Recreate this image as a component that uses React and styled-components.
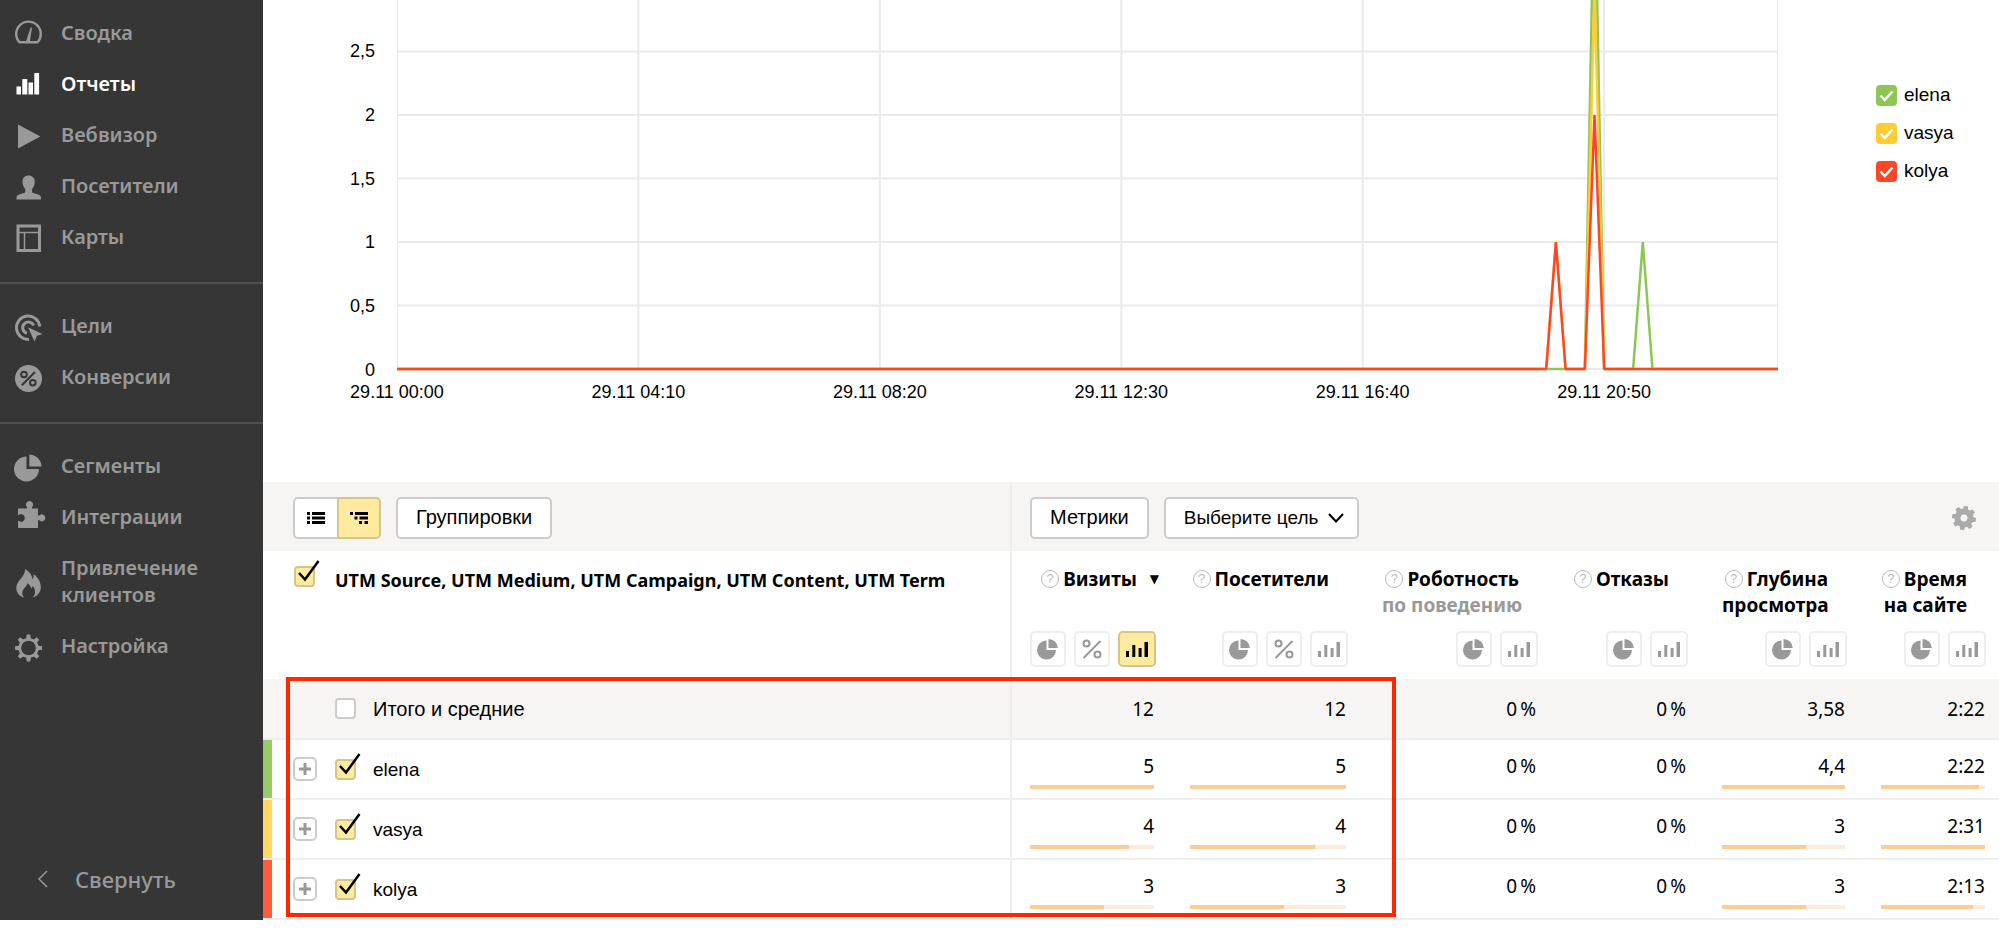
import React, { useState } from 'react';
import styled, { createGlobalStyle } from 'styled-components';

const STEPS = 143;
const TICK_STEP = 25;
const UNIT = 127;
const BASE = 369;

const yTicks = ['2,5', '2', '1,5', '1', '0,5', '0'];
const xTicks = ['29.11 00:00', '29.11 04:10', '29.11 08:20', '29.11 12:30', '29.11 16:40', '29.11 20:50'];

const series = [
  { name: 'elena', color: '#8dc653', stripe: '#97cc64', peaks: [[124, 4], [129, 1]] },
  { name: 'vasya', color: '#ffcc33', stripe: '#ffd963', peaks: [[120, 1], [124, 3]] },
  { name: 'kolya', color: '#ff4527', stripe: '#ff5c3e', peaks: [[120, 1], [124, 2]] },
];

const menu = [
  [
    { icon: 'gauge', label: 'Сводка' },
    { icon: 'bars', label: 'Отчеты', active: true },
    { icon: 'play', label: 'Вебвизор' },
    { icon: 'person', label: 'Посетители' },
    { icon: 'map', label: 'Карты' },
  ],
  [
    { icon: 'target', label: 'Цели' },
    { icon: 'percent', label: 'Конверсии' },
  ],
  [
    { icon: 'pie', label: 'Сегменты' },
    { icon: 'puzzle', label: 'Интеграции' },
    { icon: 'fire', label: 'Привлечение клиентов' },
    { icon: 'gear', label: 'Настройка' },
  ],
];

const columns = [
  { title: 'Визиты', width: 160, tools: ['pie', 'percent', 'bars'], active: 'bars', sorted: true },
  { title: 'Посетители', width: 192, tools: ['pie', 'percent', 'bars'] },
  { title: 'Роботность', sub: 'по поведению', muted: true, width: 190, tools: ['pie', 'bars'] },
  { title: 'Отказы', width: 150, tools: ['pie', 'bars'] },
  { title: 'Глубина', sub: 'просмотра', width: 159, tools: ['pie', 'bars'] },
  { title: 'Время', sub: 'на сайте', width: 136, tools: ['pie', 'bars'] },
];

const totals = ['12', '12', '0\u2009%', '0\u2009%', '3,58', '2:22'];

const rows = [
  { values: ['5', '5', '0\u2009%', '0\u2009%', '4,4', '2:22'], shares: [100, 100, null, null, 100, 94] },
  { values: ['4', '4', '0\u2009%', '0\u2009%', '3', '2:31'], shares: [80, 80, null, null, 68, 100] },
  { values: ['3', '3', '0\u2009%', '0\u2009%', '3', '2:13'], shares: [60, 60, null, null, 68, 88] },
];

const linePoints = (peaks) => {
  const points = [[0, 0]];
  peaks.forEach(([at, value]) => {
    points.push([at - 1, 0], [at, value], [at + 1, 0]);
  });
  points.push([STEPS, 0]);
  return points.map(([x, v]) => `${x * 10},${BASE - v * UNIT}`).join(' ');
};

const teeth = [0, 45, 90, 135, 180, 225, 270, 315];

const menuIcons = {
  gauge: (
    <>
      <path d='M7.4 25.2 A12.3 12.3 0 1 1 25.6 25.2 Z' fill='none' stroke='currentColor' strokeWidth='2.4' strokeLinejoin='round'/>
      <path d='M20 10.500 L17.800 25 H13.800 L18.600 10.500 Z' fill='currentColor'/>
    </>
  ),
  bars: <path d='M4.5 18.5h4.5v8h-4.5z M10.3 11h5v15.5h-5z M16.5 14.5h4.5v12h-4.5z M22.3 5h4.8v21.5h-4.8z' fill='currentColor'/>,
  play: <path d='M6 5.5 L28.4 17.5 L6 29.5 Z' fill='currentColor'/>,
  person: <path d='M16.5 5.5c-3.6 0-6 2.500-6 6 0 3.200 1 5.800 2.700 7.500v3.500c-3.200 1.500-8.700 1.800-8.700 5v2h24.500v-2c0-3.200-5.500-3.500-8.900-5v-3.500c1.700-1.700 2.600-4.300 2.600-7.500 0-3.500-2.600-6-6.200-6z' fill='currentColor'/>,
  map: (
    <>
      <rect x='6' y='5' width='21.500' height='24.500' fill='none' stroke='currentColor' strokeWidth='3'/>
      <path d='M6 11.500 H27 M12.500 11.500 V29' fill='none' stroke='currentColor' strokeWidth='1.500'/>
    </>
  ),
  target: (
    <>
      <path d='M27.800 16.500 A11.700 11.700 0 1 0 17 29.400' fill='none' stroke='currentColor' strokeWidth='3'/>
      <path d='M21.600 15.500 A5.700 5.700 0 1 0 15 23.300' fill='none' stroke='currentColor' strokeWidth='3'/>
      <path d='M16 17.300 L30.500 24 L25 25.800 L22.500 31.500 Z' fill='currentColor'/>
    </>
  ),
  percent: (
    <>
      <circle cx='16.500' cy='17.500' r='13.500' fill='currentColor'/>
      <g fill='none' stroke='#363636' strokeWidth='2'>
        <circle cx='12' cy='13.500' r='2.800'/>
        <circle cx='20.800' cy='21.800' r='2.800'/>
        <path d='M23 11 L9.800 24.200'/>
      </g>
    </>
  ),
  pie: (
    <path d='M14.500 6.500 V19 H27 A12.500 12.500 0 1 1 14.500 6.500 Z M17.300 4.500 A12.300 12.300 0 0 1 29.500 16.500 H17.300 Z' fill='currentColor'/>
  ),
  puzzle: (
    <path d='M6 7.500h8.200c1.200 0 1.200-.8.600-1.600a3.500 3.500 0 1 1 5.400 0c-.6.800-.6 1.600.6 1.600h5.200v6.200c0 1.200.8 1.200 1.600.6a3.400 3.400 0 1 1 0 5.200c-.8-.6-1.600-.6-1.600.6v6.900h-20v-7.500c1.200 1 3 1.600 4.600.9a3.700 3.700 0 0 0 0-6.800c-1.600-.7-3.400-.1-4.600.9z' fill='currentColor'/>
  ),
  fire: (
    <path d='M13 4c5 3 7.500 7 7.600 10.500 1-1.200 1.300-3.500.9-5.500 4.500 3 7.300 8.300 7.300 13 0 5.300-3.300 9.300-8.300 10.500 2-2 2.800-4 2.500-6.500-.2-2-1-3.600-2.500-5-.1 1.300-.5 2-1.300 2.600-.5-2.500-1.700-4.200-4-5.300.3 3-4.700 5.200-4.900 9.400-.1 1.900.6 3.400 2 4.800-5-1.200-8-4.800-8-9.800 0-7.200 9.500-11.200 8.700-18.700z' fill='currentColor'/>
  ),
  gear: (
    <>
      <circle cx='16.500' cy='18' r='8.700' fill='none' stroke='currentColor' strokeWidth='2.800'/>
      {teeth.map((angle) => (
        <path key={angle} transform={`rotate(${angle} 16.500 18)`} d='M14 9.500 L14.800 4.500 H18.200 L19 9.500 Z' fill='currentColor'/>
      ))}
    </>
  ),
};

const toolIcons = {
  pie: <path d='M9.500 2.500 V12 H19 A9.500 9.500 0 1 1 9.500 2.500 Z M11.500 1 A9.300 9.300 0 0 1 20.800 10 H11.500 Z' fill='currentColor'/>,
  percent: (
    <g fill='none' stroke='currentColor' strokeWidth='2'>
      <circle cx='5.500' cy='5.500' r='3'/>
      <circle cx='16.500' cy='16.500' r='3'/>
      <path d='M19.500 3 L2.500 20'/>
    </g>
  ),
  bars: <path d='M0 13h3v6H0z M6.300 7h3v12h-3z M12.600 10h3v9h-3z M18.500 4h3.500v15h-3.500z' fill='currentColor'/>,
};

const Check = ({ label, defaultChecked }) => {
  const [checked, setChecked] = useState(defaultChecked);

  return(
    <CheckBox>
      <CheckInput type='checkbox' aria-label={label} checked={checked} onChange={() => setChecked(!checked)}/>
      {checked &&
        <CheckTick viewBox='0 0 21 21' aria-hidden='true'>
          <path d='M5 7 L11 13.500 L24.500 -5'/>
        </CheckTick>
      }
    </CheckBox>
  );
};

const LegendItem = ({ name, color }) => {
  const [checked, setChecked] = useState(true);

  return(
    <LegendLabel>
      <CheckBox>
        <LegendInput type='checkbox' $color={color} checked={checked} onChange={() => setChecked(!checked)}/>
        {checked &&
          <LegendTick viewBox='0 0 21 21' aria-hidden='true'>
            <path d='M4.500 10.500 L8.800 15 L16.500 6.500'/>
          </LegendTick>
        }
      </CheckBox>
      {name}
    </LegendLabel>
  );
};

const Sidebar = () => (
  <SidebarNav>
    {menu.map((group, i) => (
      <MenuGroup key={i}>
        {group.map(({ icon, label, active }) => (
          <MenuLink key={label} href='#' $active={active}>
            <MenuIcon viewBox='0 0 32 32' aria-hidden='true'>{menuIcons[icon]}</MenuIcon>
            <MenuLabel>{label}</MenuLabel>
          </MenuLink>
        ))}
      </MenuGroup>
    ))}
    <CollapseButton type='button'>
      <CollapseIcon viewBox='0 0 10 18' aria-hidden='true'>
        <path d='M9 1 L1 9 L9 17'/>
      </CollapseIcon>
      Свернуть
    </CollapseButton>
  </SidebarNav>
);

const Chart = () => (
  <ChartSection>
    <YAxis>
      {yTicks.map((tick) => <span key={tick}>{tick}</span>)}
    </YAxis>
    <PlotColumn>
      <Plot viewBox={`0 0 ${STEPS * 10} 371`} preserveAspectRatio='none'>
        <g stroke='#eaeaea' strokeWidth='2'>
          {yTicks.map((tick, i) => (
            <line key={tick} x1='0' x2={STEPS * 10} y1={BASE - (5 - i) * UNIT / 2} y2={BASE - (5 - i) * UNIT / 2} vectorEffect='non-scaling-stroke'/>
          ))}
          {[...xTicks.map((_, i) => i * TICK_STEP), STEPS].map((at) => (
            <line key={at} x1={at * 10} x2={at * 10} y1='0' y2={BASE + 1} vectorEffect='non-scaling-stroke'/>
          ))}
        </g>
        {series.map(({ name, color, peaks }) => (
          <polyline key={name} points={linePoints(peaks)} fill='none' stroke={color} strokeWidth='2.500' strokeLinejoin='bevel' vectorEffect='non-scaling-stroke'/>
        ))}
      </Plot>
      <XAxis>
        {xTicks.map((tick) => <XTick key={tick}><XLabel>{tick}</XLabel></XTick>)}
      </XAxis>
    </PlotColumn>
    <Legend>
      {series.map(({ name, color }) => <LegendItem key={name} name={name} color={color}/>)}
    </Legend>
  </ChartSection>
);

const Toolbar = () => (
  <ToolbarRow>
    <ToolbarLeft>
      <Segmented>
        <Segment type='button' aria-label='Список'>
          <SegmentIcon viewBox='0 0 18 12'>
            <path d='M0 0h3v3H0z M5 0h13v3H5z M0 4.500h3v3H0z M5 4.500h13v3H5z M0 9h3v3H0z M5 9h13v3H5z'/>
          </SegmentIcon>
        </Segment>
        <Segment type='button' aria-label='Дерево' $active>
          <SegmentIcon viewBox='0 0 18 12'>
            <path d='M0 0h3v3H0z M5 0h13v3H5z M4.500 4.500h3v3h-3z M9.500 4.500h8.500v3h-8.500z M9 9h3v3H9z M14.500 9h3.500v3h-3.500z'/>
          </SegmentIcon>
        </Segment>
      </Segmented>
      <Button type='button'>Группировки</Button>
    </ToolbarLeft>
    <ToolbarRight>
      <Button type='button'>Метрики</Button>
      <SelectBox>
        <GoalSelect aria-label='Цель'>
          <option>Выберите цель</option>
        </GoalSelect>
        <SelectArrow viewBox='0 0 16 10' aria-hidden='true'>
          <path d='M1 1 L8 8.500 L15 1'/>
        </SelectArrow>
      </SelectBox>
      <SettingsButton type='button' aria-label='Настройки'>
        <svg width='24' height='24' viewBox='0 0 24 24'>
          <g transform='rotate(10 12 12)'>
            <circle cx='12' cy='12' r='6.500' fill='none' stroke='currentColor' strokeWidth='6'/>
            {teeth.map((angle) => (
              <path key={angle} transform={`rotate(${angle} 12 12)`} d='M9.300 4.500 L10 0 H14 L14.700 4.500 Z' fill='currentColor'/>
            ))}
          </g>
        </svg>
      </SettingsButton>
    </ToolbarRight>
  </ToolbarRow>
);

const HeadCell = ({ title, sub, muted, sorted, tools, active }) => (
  <MetricHead scope='col'>
    <HeadInner>
      <HeadTitle>
        <HeadLine><Hint>?</Hint>{title}{sorted && <SortMark>▼</SortMark>}</HeadLine>
        {sub && <HeadSub $muted={muted}>{sub}</HeadSub>}
      </HeadTitle>
      <Tools>
        {tools.map((tool) => (
          <Tool key={tool} type='button' aria-label={tool} $wide={tool === 'bars'} $active={tool === active}>
            <ToolIcon viewBox='0 0 22 22'>{toolIcons[tool]}</ToolIcon>
          </Tool>
        ))}
      </Tools>
    </HeadInner>
  </MetricHead>
);

const Report = () => (
  <ReportBox>
    <Table>
      <colgroup>
        <col/>
        {columns.map(({ title, width }) => <Col key={title} $width={width}/>)}
      </colgroup>
      <thead>
        <tr>
          <NameHead scope='col'>
            <NameHeadInner>
              <Check label='Выбрать все' defaultChecked/>
              <span>UTM Source, UTM Medium, UTM Campaign, UTM Content, UTM Term</span>
            </NameHeadInner>
          </NameHead>
          {columns.map((column) => <HeadCell key={column.title} {...column}/>)}
        </tr>
      </thead>
      <tbody>
        <TotalRow>
          <NameCell scope='row'>
            <NameInner $total>
              <ExpandSpace/>
              <Check label='Итого и средние' defaultChecked={false}/>
              <NameText $total>Итого и средние</NameText>
            </NameInner>
          </NameCell>
          {totals.map((value, i) => <TotalCell key={i}>{value}</TotalCell>)}
        </TotalRow>
        {rows.map(({ values, shares }, r) => (
          <tr key={r}>
            <NameCell scope='row'>
              <NameInner $stripe={series[r].stripe}>
                <ExpandButton type='button' aria-label='Развернуть'>
                  <svg width='12' height='12' viewBox='0 0 12 12'>
                    <path d='M6 0 V12 M0 6 H12' stroke='#999' strokeWidth='3'/>
                  </svg>
                </ExpandButton>
                <Check label={series[r].name} defaultChecked/>
                <NameText>{series[r].name}</NameText>
              </NameInner>
            </NameCell>
            {values.map((value, i) => (
              <ValueCell key={i}>
                {value}
                {shares[i] && <Track><Fill style={{ width: `${shares[i]}%` }}/></Track>}
              </ValueCell>
            ))}
          </tr>
        ))}
      </tbody>
    </Table>
    <Highlight/>
  </ReportBox>
);

const App = () => (
  <>
    <GlobalStyle/>
    <Page>
      <Sidebar/>
      <Main>
        <Chart/>
        <Toolbar/>
        <Report/>
      </Main>
    </Page>
  </>
);

const GlobalStyle = createGlobalStyle`
  * {
    box-sizing: border-box;
  }
  body {
    margin: 0;
    background: #fff;
    color: #000;
    font-family: 'Liberation Sans', Arial, sans-serif;
    font-size: 19px;
  }
  button, select {
    font: inherit;
    color: inherit;
    cursor: pointer;
  }
`;

const Page = styled.div`
  display: grid;
  grid-template-columns: 263px 1fr;
`;

const Main = styled.main`
  min-width: 0;
`;

const SidebarNav = styled.nav`
  display: flex;
  flex-direction: column;
  padding: 7px 0 16px;
  background: #363636;
  color: #999;
  font-family: 'Noto Sans', sans-serif;
  font-size: 20px;
  font-weight: 600;
`;

const MenuGroup = styled.div`
  & + & {
    margin-top: 20px;
    padding-top: 16px;
    border-top: 2px solid #4f4f4f;
  }
`;

const MenuLink = styled.a`
  display: flex;
  align-items: center;
  gap: 17px;
  min-height: 51px;
  padding: 0 12px;
  color: ${({ $active }) => $active ? '#fff' : '#999'};
  line-height: 27px;
  text-decoration: none;
`;

const MenuIcon = styled.svg`
  flex: none;
  width: 32px;
  height: 32px;
  overflow: visible;
`;

const MenuLabel = styled.span`
  padding: 12px 0;
`;

const CollapseButton = styled.button`
  display: flex;
  align-items: center;
  gap: 27px;
  height: 51px;
  margin-top: auto;
  padding: 0 38px;
  border: 0;
  background: none;
  font-size: 22px;
  font-weight: 500;
`;

const CollapseIcon = styled.svg`
  width: 10px;
  height: 18px;
  fill: none;
  stroke: #999;
  stroke-width: 1.5;
`;

const ChartSection = styled.section`
  display: flex;
  height: 482px;
`;

const YAxis = styled.div`
  display: flex;
  flex-direction: column;
  justify-content: space-between;
  width: 134px;
  height: 380px;
  padding: 41px 22px 0 0;
  font-size: 18px;
  line-height: 20px;
  text-align: right;
`;

const PlotColumn = styled.div`
  flex: 1;
  min-width: 0;
`;

const Plot = styled.svg`
  display: block;
  width: 100%;
  height: 371px;
`;

const XAxis = styled.div`
  display: flex;
  padding-top: 11px;
  font-size: 18px;
  line-height: 20px;
`;

const XTick = styled.div`
  flex: 0 0 calc(100% * 25 / 143);
`;

const XLabel = styled.span`
  display: block;
  width: 120px;
  margin-left: -60px;
  text-align: center;
`;

const Legend = styled.div`
  display: flex;
  flex-direction: column;
  gap: 16px;
  width: 221px;
  padding: 84px 0 0 98px;
`;

const LegendLabel = styled.label`
  display: flex;
  align-items: center;
  gap: 7px;
  line-height: 22px;
`;

const CheckBox = styled.span`
  position: relative;
  flex: none;
  display: block;
  width: 21px;
  height: 21px;
`;

const CheckInput = styled.input`
  appearance: none;
  display: block;
  width: 21px;
  height: 21px;
  margin: 0;
  border: 2px solid #ccc;
  border-radius: 4px;
  background: #fff;
  &:checked {
    border-color: #d6c588;
    background: #ffeba0;
  }
`;

const LegendInput = styled(CheckInput)`
  border-color: ${({ $color }) => $color};
  &:checked {
    border-color: ${({ $color }) => $color};
    background: ${({ $color }) => $color};
  }
`;

const CheckTick = styled.svg`
  position: absolute;
  inset: 0;
  overflow: visible;
  pointer-events: none;
  fill: none;
  stroke: #000;
  stroke-width: 2.5;
`;

const LegendTick = styled(CheckTick)`
  stroke: #fff;
`;

const ToolbarRow = styled.div`
  display: flex;
  height: 69px;
  background: #f6f5f3;
`;

const ToolbarLeft = styled.div`
  display: flex;
  flex: 1;
  align-items: center;
  gap: 15px;
  padding: 2px 0 0 30px;
  border-right: 2px solid #eeedeb;
`;

const ToolbarRight = styled.div`
  display: flex;
  align-items: center;
  gap: 15px;
  width: 987px;
  padding: 2px 23px 0 18px;
`;

const Button = styled.button`
  height: 42px;
  padding: 0 18px;
  border: 2px solid #ccc;
  border-radius: 5px;
  background: #fff;
  font-size: 20px;
`;

const Segmented = styled.div`
  display: flex;
`;

const Segment = styled.button`
  display: flex;
  align-items: center;
  justify-content: center;
  width: 44px;
  height: 42px;
  padding: 0;
  border: 2px solid ${({ $active }) => $active ? '#d6c588' : '#ccc'};
  border-right-width: ${({ $active }) => $active ? '2px' : '0'};
  border-radius: ${({ $active }) => $active ? '0 5px 5px 0' : '5px 0 0 5px'};
  background: ${({ $active }) => $active ? '#ffeba0' : '#fff'};
`;

const SegmentIcon = styled.svg`
  width: 18px;
  height: 12px;
`;

const SelectBox = styled.div`
  position: relative;
`;

const GoalSelect = styled.select`
  appearance: none;
  height: 42px;
  padding: 0 38px 0 18px;
  border: 2px solid #ccc;
  border-radius: 5px;
  background: #fff;
`;

const SelectArrow = styled.svg`
  position: absolute;
  top: 16px;
  right: 15px;
  width: 16px;
  height: 10px;
  pointer-events: none;
  fill: none;
  stroke: #000;
  stroke-width: 2;
`;

const SettingsButton = styled.button`
  display: flex;
  margin-left: auto;
  padding: 0;
  border: 0;
  background: none;
  color: #aaa;
`;

const ReportBox = styled.div`
  position: relative;
`;

const Table = styled.table`
  width: 100%;
  table-layout: fixed;
  border-collapse: separate;
  border-spacing: 0;
`;

const Col = styled.col`
  width: ${({ $width }) => $width}px;
`;

const NameHead = styled.th`
  height: 128px;
  padding: 0;
  border-right: 2px solid #eee;
  vertical-align: top;
  text-align: left;
`;

const NameHeadInner = styled.div`
  display: flex;
  gap: 20px;
  padding: 15px 0 0 31px;
  font-family: 'Noto Sans', sans-serif;
  font-size: 18px;
  line-height: 28px;
  white-space: nowrap;
`;

const MetricHead = styled.th`
  height: 128px;
  padding: 15px 16px 12px 18px;
  font-family: 'Noto Sans', sans-serif;
  font-size: 19px;
  line-height: 26px;
  text-align: right;
  &:last-child {
    padding-right: 13px;
  }
`;

const HeadInner = styled.div`
  display: flex;
  flex-direction: column;
  justify-content: space-between;
  height: 101px;
`;

const HeadTitle = styled.div`
  padding-right: 19px;
`;

const HeadLine = styled.div`
  position: relative;
  display: flex;
  align-items: center;
  justify-content: flex-end;
  gap: 4px;
`;

const HeadSub = styled.div`
  color: ${({ $muted }) => $muted ? '#999' : '#000'};
  white-space: nowrap;
`;

const Hint = styled.span`
  display: flex;
  align-items: center;
  justify-content: center;
  width: 18px;
  height: 18px;
  border: 1px solid #bbb;
  border-radius: 50%;
  color: #bbb;
  font-family: 'Liberation Sans', Arial, sans-serif;
  font-size: 13px;
  font-weight: 400;
`;

const SortMark = styled.span`
  position: absolute;
  right: -22px;
  font-family: 'DejaVu Sans', sans-serif;
  font-size: 12px;
`;

const Tools = styled.div`
  display: flex;
  justify-content: flex-end;
  gap: 8px;
`;

const Tool = styled.button`
  display: flex;
  align-items: center;
  justify-content: center;
  width: ${({ $wide }) => $wide ? '38px' : '36px'};
  height: 36px;
  padding: 0;
  border: 2px solid ${({ $active }) => $active ? '#d6c588' : '#eee'};
  border-radius: 5px;
  background: ${({ $active }) => $active ? '#ffeba0' : '#fff'};
  color: ${({ $active }) => $active ? '#000' : '#999'};
`;

const ToolIcon = styled.svg`
  width: 22px;
  height: 22px;
`;

const TotalRow = styled.tr`
  background: #f6f5f3;
`;

const NameCell = styled.th`
  padding: 0;
  border-right: 2px solid #eee;
  border-bottom: 2px solid #eee;
  font-weight: 400;
  text-align: left;
`;

const NameInner = styled.div`
  display: flex;
  align-items: center;
  height: ${({ $total }) => $total ? '59px' : '58px'};
  padding-left: 21px;
  border-left: 9px solid ${({ $stripe }) => $stripe || 'transparent'};
`;

const NameText = styled.span`
  padding-top: 2px;
  margin-left: 17px;
  font-size: ${({ $total }) => $total ? '20px' : '19px'};
`;

const ExpandSpace = styled.i`
  width: 42px;
`;

const ExpandButton = styled.button`
  display: flex;
  align-items: center;
  justify-content: center;
  width: 24px;
  height: 24px;
  margin-right: 18px;
  padding: 0;
  border: 2px solid #ccc;
  border-radius: 5px;
  background: #fff;
`;

const ValueCell = styled.td`
  padding: 14px 18px 8px;
  border-bottom: 2px solid #eee;
  font-family: 'Noto Sans', sans-serif;
  font-size: 19px;
  line-height: 24px;
  text-align: right;
  vertical-align: top;
  &:last-child {
    padding-right: 14px;
  }
`;

const TotalCell = styled(ValueCell)`
  padding: 0 18px;
  vertical-align: middle;
`;

const Track = styled.div`
  height: 4px;
  margin-top: 7px;
  background: #ffebd9;
`;

const Fill = styled.div`
  height: 100%;
  background: #ffcb94;
`;

// red frame around the campaign names and the first two metrics
const Highlight = styled.div`
  position: absolute;
  top: 126px;
  right: 603px;
  bottom: 3px;
  left: 23px;
  border: 4px solid #ff2600;
  pointer-events: none;
`;

export default App;
